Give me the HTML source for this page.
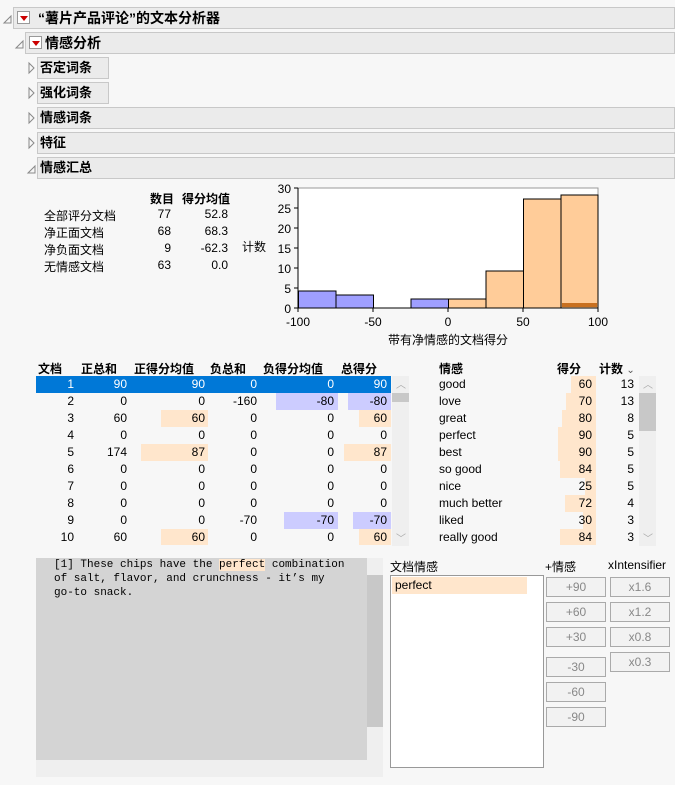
<!DOCTYPE html>
<html><head><meta charset="utf-8"><style>
*{margin:0;padding:0;box-sizing:border-box}
body{width:675px;height:785px;background:#f7f7f7;position:relative;overflow:hidden;font-family:"Liberation Sans","Noto Sans CJK SC",sans-serif;font-size:12px;color:#000}
.a{position:absolute;white-space:nowrap}
.bar{position:absolute;background:#ebebeb;border:1px solid #c8c8c8;font-weight:bold;font-size:13px;line-height:19px;padding-left:2px}
.tri{position:absolute;width:0;height:0}
.dd{position:absolute;width:13px;height:13px;border:1px solid #999;background:#fff}
.dd:after{content:"";position:absolute;left:2px;top:4px;border-left:4px solid transparent;border-right:4px solid transparent;border-top:5px solid #c00}
.r{position:absolute;text-align:right}
.ob{position:absolute;background:#ffe6cc}
.bb{position:absolute;background:#ccccff}
.btn{position:absolute;width:60px;height:20px;border:1px solid #aaa;background:#f2f2f2;color:#888;text-align:center;line-height:18px;font-size:12px}
.sb{position:absolute;background:#efefef}
.th{position:absolute;background:#c8c8c8}
</style></head><body>
<!-- tree triangles -->
<svg class="a" style="left:0;top:0" width="40" height="180">
<path d="M4 23 L11 16 L11 23 Z" fill="none" stroke="#888"/>
<path d="M16 48 L23 41 L23 48 Z" fill="none" stroke="#888"/>
<path d="M29 63 L34 68 L29 73 Z" fill="none" stroke="#888"/>
<path d="M29 88 L34 93 L29 98 Z" fill="none" stroke="#888"/>
<path d="M29 113 L34 118 L29 123 Z" fill="none" stroke="#888"/>
<path d="M29 138 L34 143 L29 148 Z" fill="none" stroke="#888"/>
<path d="M28 173 L35 166 L35 173 Z" fill="none" stroke="#888"/>
</svg>
<div class="bar" style="left:13px;top:7px;width:662px;height:22px;padding-left:24px;font-size:14px;line-height:20px">“薯片产品评论”的文本分析器</div>
<div class="dd" style="left:17px;top:11px"></div>
<div class="bar" style="left:25px;top:32px;width:650px;height:22px;padding-left:19px;font-size:14px;line-height:20px">情感分析</div>
<div class="dd" style="left:29px;top:36px"></div>
<div class="bar" style="left:37px;top:57px;width:72px;height:22px">否定词条</div>
<div class="bar" style="left:37px;top:82px;width:72px;height:22px">强化词条</div>
<div class="bar" style="left:37px;top:107px;width:638px;height:22px">情感词条</div>
<div class="bar" style="left:37px;top:132px;width:638px;height:22px">特征</div>
<div class="bar" style="left:37px;top:157px;width:638px;height:22px">情感汇总</div>

<!-- stats -->
<div class="r" style="left:130px;top:190px;width:44px;font-weight:bold">数目</div>
<div class="r" style="left:170px;top:190px;width:60px;font-weight:bold">得分均值</div>
<div class="a" style="left:44px;top:207px">全部评分文档</div><div class="r" style="left:130px;top:207px;width:41px">77</div><div class="r" style="left:170px;top:207px;width:58px">52.8</div>
<div class="a" style="left:44px;top:224px">净正面文档</div><div class="r" style="left:130px;top:224px;width:41px">68</div><div class="r" style="left:170px;top:224px;width:58px">68.3</div>
<div class="a" style="left:44px;top:241px">净负面文档</div><div class="r" style="left:130px;top:241px;width:41px">9</div><div class="r" style="left:170px;top:241px;width:58px">-62.3</div>
<div class="a" style="left:44px;top:258px">无情感文档</div><div class="r" style="left:130px;top:258px;width:41px">63</div><div class="r" style="left:170px;top:258px;width:58px">0.0</div>

<!-- histogram -->
<svg class="a" style="left:240px;top:180px" width="380" height="170" font-family="Liberation Sans,Noto Sans CJK SC,sans-serif" font-size="12">
<rect x="58" y="8" width="300" height="120" fill="#fff" stroke="#999"/>
<g stroke="#000" stroke-width="1">
<rect x="58.5" y="111" width="37.5" height="17" fill="#9f9fff"/>
<rect x="96" y="115" width="37.5" height="13" fill="#9f9fff"/>
<rect x="171" y="119" width="37.5" height="9" fill="#9f9fff"/>
<rect x="208.5" y="119" width="37.5" height="9" fill="#ffcc99"/>
<rect x="246" y="91" width="37.5" height="37" fill="#ffcc99"/>
<rect x="283.5" y="19" width="37.5" height="109" fill="#ffcc99"/>
<rect x="321" y="15" width="37" height="113" fill="#ffcc99"/>
</g>
<rect x="322" y="123" width="35" height="4" fill="#c87020"/>
<g stroke="#000"><line x1="58" y1="8" x2="58" y2="132"/><line x1="54" y1="8" x2="58" y2="8"/><line x1="54" y1="28" x2="58" y2="28"/><line x1="54" y1="48" x2="58" y2="48"/><line x1="54" y1="68" x2="58" y2="68"/><line x1="54" y1="88" x2="58" y2="88"/><line x1="54" y1="108" x2="58" y2="108"/><line x1="54" y1="128" x2="58" y2="128"/>
<line x1="58" y1="128" x2="358" y2="128"/><line x1="133" y1="128" x2="133" y2="132"/><line x1="208" y1="128" x2="208" y2="132"/><line x1="283" y1="128" x2="283" y2="132"/><line x1="358" y1="128" x2="358" y2="132"/></g>
<g text-anchor="end"><text x="51" y="13">30</text><text x="51" y="33">25</text><text x="51" y="53">20</text><text x="51" y="73">15</text><text x="51" y="93">10</text><text x="51" y="113">5</text><text x="51" y="133">0</text></g>
<g text-anchor="middle"><text x="58" y="146">-100</text><text x="133" y="146">-50</text><text x="208" y="146">0</text><text x="283" y="146">50</text><text x="358" y="146">100</text><text x="208" y="164">带有净情感的文档得分</text></g>
<text x="2" y="71">计数</text>
</svg>

<!-- left table -->
<div class="a" style="left:38px;top:360px;font-weight:bold">文档</div>
<div class="a" style="left:81px;top:360px;font-weight:bold">正总和</div>
<div class="a" style="left:134px;top:360px;font-weight:bold">正得分均值</div>
<div class="a" style="left:210px;top:360px;font-weight:bold">负总和</div>
<div class="a" style="left:263px;top:360px;font-weight:bold">负得分均值</div>
<div class="a" style="left:341px;top:360px;font-weight:bold">总得分</div>
<div class="a" style="left:36px;top:376px;width:355px;height:17px;background:#0078d7"></div>
<div class="bb" style="left:276px;top:393px;width:62px;height:17px"></div><div class="bb" style="left:348px;top:393px;width:43px;height:17px"></div>
<div class="ob" style="left:161px;top:410px;width:47px;height:17px"></div><div class="ob" style="left:359px;top:410px;width:32px;height:17px"></div>
<div class="ob" style="left:141px;top:444px;width:67px;height:17px"></div><div class="ob" style="left:344px;top:444px;width:47px;height:17px"></div>
<div class="bb" style="left:284px;top:512px;width:54px;height:17px"></div><div class="bb" style="left:353px;top:512px;width:38px;height:17px"></div>
<div class="ob" style="left:161px;top:529px;width:47px;height:16px"></div><div class="ob" style="left:359px;top:529px;width:32px;height:16px"></div>
<div id="lt"></div>
<div class="sb" style="left:392px;top:376px;width:17px;height:170px"></div>
<div class="th" style="left:392px;top:393px;width:17px;height:9px"></div>
<div class="a" style="left:396px;top:376px;color:#aaa;font-size:10px">︿</div>
<div class="a" style="left:396px;top:530px;color:#aaa;font-size:10px">﹀</div>

<!-- right table -->
<div class="a" style="left:439px;top:360px;font-weight:bold">情感</div>
<div class="a" style="left:557px;top:360px;font-weight:bold">得分</div>
<div class="a" style="left:599px;top:360px;font-weight:bold">计数 <span style="font-weight:normal;color:#555;font-size:10px">⌄</span></div>
<div id="rt"></div>
<div class="sb" style="left:639px;top:376px;width:17px;height:170px"></div>
<div class="th" style="left:639px;top:393px;width:17px;height:38px"></div>
<div class="a" style="left:643px;top:376px;color:#aaa;font-size:10px">︿</div>
<div class="a" style="left:643px;top:530px;color:#aaa;font-size:10px">﹀</div>

<!-- text area -->
<div class="a" style="left:36px;top:558px;width:331px;height:202px;background:#d4d4d4"></div>
<div class="a" style="left:54px;top:558px;font-family:'Liberation Mono',monospace;font-size:11px;line-height:14px;white-space:pre">[1] These chips have the <span style="background:#ffe6cc">perfect</span> combination
of salt, flavor, and crunchness - it’s my
go-to snack.</div>
<div class="sb" style="left:367px;top:558px;width:16px;height:202px"></div>
<div class="th" style="left:367px;top:575px;width:16px;height:152px"></div>
<div class="sb" style="left:36px;top:760px;width:347px;height:17px"></div>

<div class="a" style="left:390px;top:558px">文档情感</div>
<div class="a" style="left:390px;top:575px;width:154px;height:193px;background:#fff;border:1px solid #999"></div>
<div class="a" style="left:392px;top:577px;width:135px;height:17px;background:#ffe6cc;padding-left:3px;line-height:17px">perfect</div>
<div class="a" style="left:545px;top:558px">+情感</div>
<div class="a" style="left:608px;top:558px">xIntensifier</div>
<div class="btn" style="left:546px;top:577px">+90</div>
<div class="btn" style="left:546px;top:602px">+60</div>
<div class="btn" style="left:546px;top:627px">+30</div>
<div class="btn" style="left:546px;top:657px">-30</div>
<div class="btn" style="left:546px;top:682px">-60</div>
<div class="btn" style="left:546px;top:707px">-90</div>
<div class="btn" style="left:610px;top:577px">x1.6</div>
<div class="btn" style="left:610px;top:602px">x1.2</div>
<div class="btn" style="left:610px;top:627px">x0.8</div>
<div class="btn" style="left:610px;top:652px">x0.3</div>

<div class="a" style="left:0;top:0">
<!-- left table rows -->
<div class="r" style="left:36px;top:377px;width:38px;color:#fff">1</div><div class="r" style="left:80px;top:377px;width:47px;color:#fff">90</div><div class="r" style="left:140px;top:377px;width:65px;color:#fff">90</div><div class="r" style="left:210px;top:377px;width:47px;color:#fff">0</div><div class="r" style="left:270px;top:377px;width:64px;color:#fff">0</div><div class="r" style="left:340px;top:377px;width:47px;color:#fff">90</div>
<div class="r" style="left:36px;top:394px;width:38px">2</div><div class="r" style="left:80px;top:394px;width:47px">0</div><div class="r" style="left:140px;top:394px;width:65px">0</div><div class="r" style="left:210px;top:394px;width:47px">-160</div><div class="r" style="left:270px;top:394px;width:64px">-80</div><div class="r" style="left:340px;top:394px;width:47px">-80</div>
<div class="r" style="left:36px;top:411px;width:38px">3</div><div class="r" style="left:80px;top:411px;width:47px">60</div><div class="r" style="left:140px;top:411px;width:65px">60</div><div class="r" style="left:210px;top:411px;width:47px">0</div><div class="r" style="left:270px;top:411px;width:64px">0</div><div class="r" style="left:340px;top:411px;width:47px">60</div>
<div class="r" style="left:36px;top:428px;width:38px">4</div><div class="r" style="left:80px;top:428px;width:47px">0</div><div class="r" style="left:140px;top:428px;width:65px">0</div><div class="r" style="left:210px;top:428px;width:47px">0</div><div class="r" style="left:270px;top:428px;width:64px">0</div><div class="r" style="left:340px;top:428px;width:47px">0</div>
<div class="r" style="left:36px;top:445px;width:38px">5</div><div class="r" style="left:80px;top:445px;width:47px">174</div><div class="r" style="left:140px;top:445px;width:65px">87</div><div class="r" style="left:210px;top:445px;width:47px">0</div><div class="r" style="left:270px;top:445px;width:64px">0</div><div class="r" style="left:340px;top:445px;width:47px">87</div>
<div class="r" style="left:36px;top:462px;width:38px">6</div><div class="r" style="left:80px;top:462px;width:47px">0</div><div class="r" style="left:140px;top:462px;width:65px">0</div><div class="r" style="left:210px;top:462px;width:47px">0</div><div class="r" style="left:270px;top:462px;width:64px">0</div><div class="r" style="left:340px;top:462px;width:47px">0</div>
<div class="r" style="left:36px;top:479px;width:38px">7</div><div class="r" style="left:80px;top:479px;width:47px">0</div><div class="r" style="left:140px;top:479px;width:65px">0</div><div class="r" style="left:210px;top:479px;width:47px">0</div><div class="r" style="left:270px;top:479px;width:64px">0</div><div class="r" style="left:340px;top:479px;width:47px">0</div>
<div class="r" style="left:36px;top:496px;width:38px">8</div><div class="r" style="left:80px;top:496px;width:47px">0</div><div class="r" style="left:140px;top:496px;width:65px">0</div><div class="r" style="left:210px;top:496px;width:47px">0</div><div class="r" style="left:270px;top:496px;width:64px">0</div><div class="r" style="left:340px;top:496px;width:47px">0</div>
<div class="r" style="left:36px;top:513px;width:38px">9</div><div class="r" style="left:80px;top:513px;width:47px">0</div><div class="r" style="left:140px;top:513px;width:65px">0</div><div class="r" style="left:210px;top:513px;width:47px">-70</div><div class="r" style="left:270px;top:513px;width:64px">-70</div><div class="r" style="left:340px;top:513px;width:47px">-70</div>
<div class="r" style="left:36px;top:530px;width:38px">10</div><div class="r" style="left:80px;top:530px;width:47px">60</div><div class="r" style="left:140px;top:530px;width:65px">60</div><div class="r" style="left:210px;top:530px;width:47px">0</div><div class="r" style="left:270px;top:530px;width:64px">0</div><div class="r" style="left:340px;top:530px;width:47px">60</div>
<!-- right table rows -->
<div class="ob" style="left:571px;top:376px;width:25px;height:17px"></div>
<div class="ob" style="left:566px;top:393px;width:30px;height:17px"></div>
<div class="ob" style="left:562px;top:410px;width:34px;height:17px"></div>
<div class="ob" style="left:558px;top:427px;width:38px;height:17px"></div>
<div class="ob" style="left:558px;top:444px;width:38px;height:17px"></div>
<div class="ob" style="left:560px;top:461px;width:36px;height:17px"></div>
<div class="ob" style="left:585px;top:478px;width:11px;height:17px"></div>
<div class="ob" style="left:565px;top:495px;width:31px;height:17px"></div>
<div class="ob" style="left:583px;top:512px;width:13px;height:17px"></div>
<div class="ob" style="left:560px;top:529px;width:36px;height:16px"></div>
<div class="a" style="left:439px;top:377px">good</div><div class="r" style="left:560px;top:377px;width:32px">60</div><div class="r" style="left:600px;top:377px;width:34px">13</div>
<div class="a" style="left:439px;top:394px">love</div><div class="r" style="left:560px;top:394px;width:32px">70</div><div class="r" style="left:600px;top:394px;width:34px">13</div>
<div class="a" style="left:439px;top:411px">great</div><div class="r" style="left:560px;top:411px;width:32px">80</div><div class="r" style="left:600px;top:411px;width:34px">8</div>
<div class="a" style="left:439px;top:428px">perfect</div><div class="r" style="left:560px;top:428px;width:32px">90</div><div class="r" style="left:600px;top:428px;width:34px">5</div>
<div class="a" style="left:439px;top:445px">best</div><div class="r" style="left:560px;top:445px;width:32px">90</div><div class="r" style="left:600px;top:445px;width:34px">5</div>
<div class="a" style="left:439px;top:462px">so good</div><div class="r" style="left:560px;top:462px;width:32px">84</div><div class="r" style="left:600px;top:462px;width:34px">5</div>
<div class="a" style="left:439px;top:479px">nice</div><div class="r" style="left:560px;top:479px;width:32px">25</div><div class="r" style="left:600px;top:479px;width:34px">5</div>
<div class="a" style="left:439px;top:496px">much better</div><div class="r" style="left:560px;top:496px;width:32px">72</div><div class="r" style="left:600px;top:496px;width:34px">4</div>
<div class="a" style="left:439px;top:513px">liked</div><div class="r" style="left:560px;top:513px;width:32px">30</div><div class="r" style="left:600px;top:513px;width:34px">3</div>
<div class="a" style="left:439px;top:530px">really good</div><div class="r" style="left:560px;top:530px;width:32px">84</div><div class="r" style="left:600px;top:530px;width:34px">3</div>
</div>
</body></html>
